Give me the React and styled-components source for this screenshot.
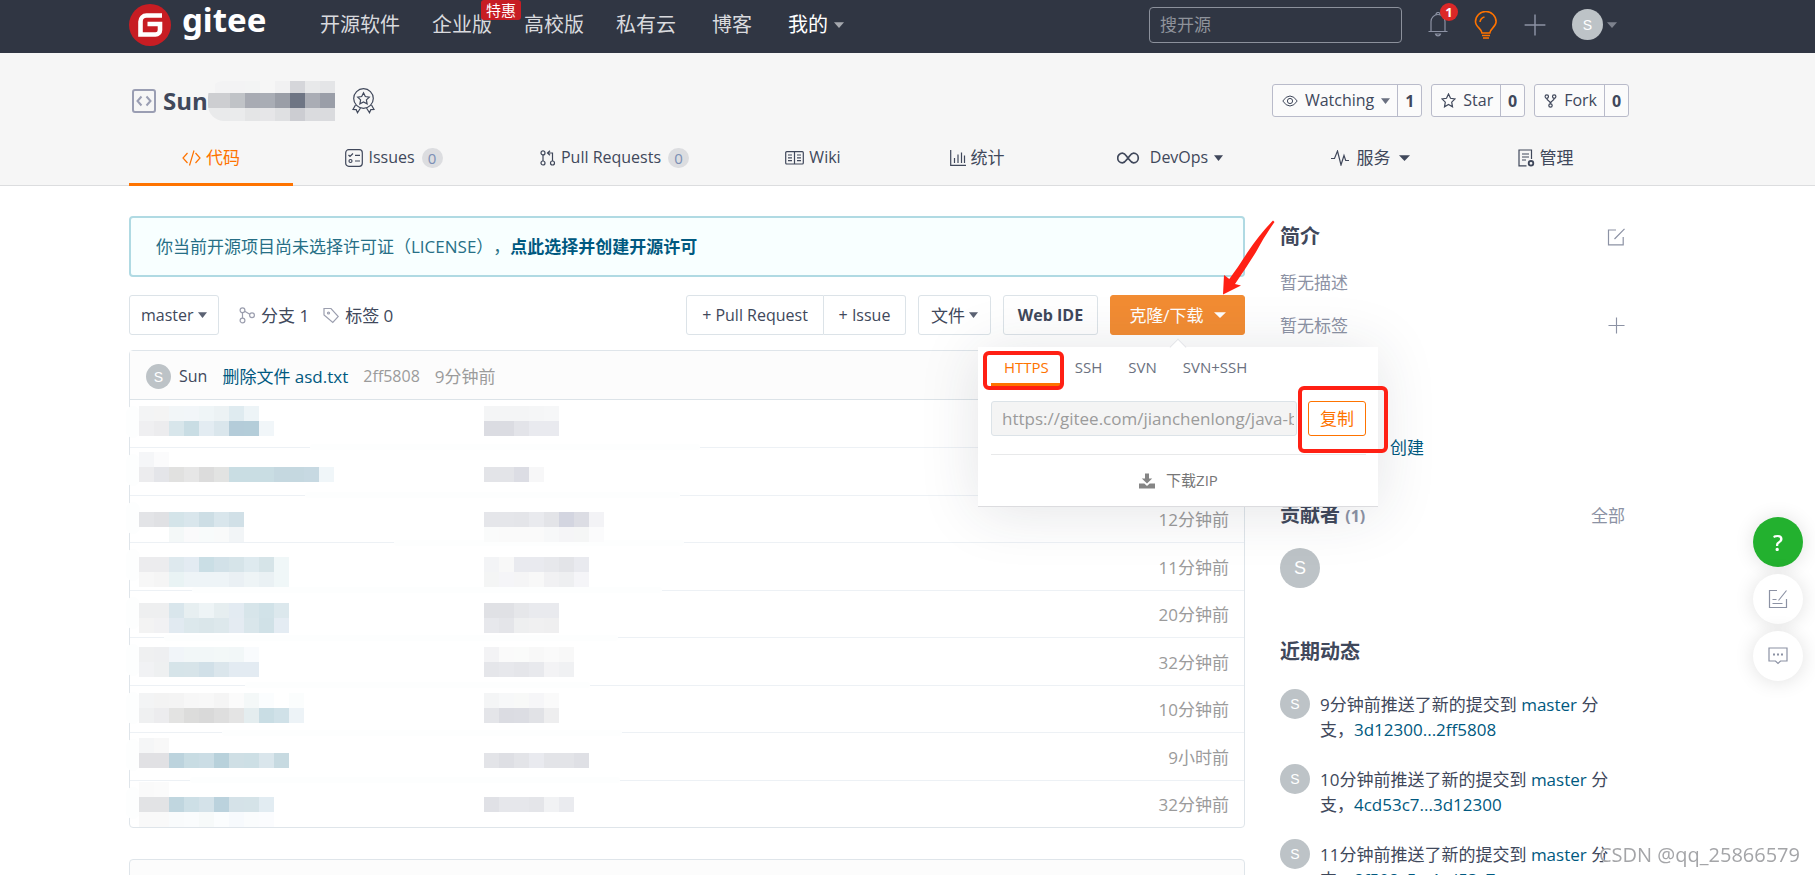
import React from "react";
import styled, { createGlobalStyle, css } from "styled-components";

const GlobalStyle = createGlobalStyle`
  *, *::before, *::after { box-sizing: border-box; }
  body {
    margin: 0;
    background: #fff;
    color: #40485b;
    font: 17px/25px "Open Sans", "Noto Sans CJK SC", sans-serif;
    text-spacing-trim: space-all;
  }
  a { color: inherit; text-decoration: none; }
  button, input, select { font: inherit; color: inherit; margin: 0; }
  h1, h2, p, ul { margin: 0; padding: 0; }
  ul { list-style: none; }
  svg { display: block; flex: none; }
`;

const Page = styled.div`
  position: relative;
  height: 100vh;
  overflow: hidden;
`;

const Container = styled.div`
  margin: 0 186px 0 129px;
`;

/* ---------- shared ---------- */

const Avatar = styled.span`
  display: flex;
  align-items: center;
  justify-content: center;
  flex: none;
  width: ${(p) => p.$size}px;
  height: ${(p) => p.$size}px;
  border-radius: 50%;
  background: #bdc3c7;
  color: #fff;
  font: 14px "Liberation Sans", sans-serif;
  ${(p) => p.$size === 40 && "font-size: 18px;"}
`;

const Caret = ({ w = 10, color = "#40485b" }) => (
  <svg width={w} height={6} viewBox="0 0 10 6" preserveAspectRatio="none" aria-hidden="true">
    <path d="M0 0.3h10L5 6z" fill={color} />
  </svg>
);

const Icon = ({ w = 18, h, vb, color = "currentColor", sw = 1.2, children }) => (
  <svg
    width={w}
    height={h || w}
    viewBox={vb || `0 0 ${w} ${h || w}`}
    fill="none"
    stroke={color}
    strokeWidth={sw}
    aria-hidden="true"
  >
    {children}
  </svg>
);

/* ---------- pixelated areas ---------- */

const MosaicClip = styled.span`
  display: flex;
  justify-content: flex-end;
  overflow: hidden;
  width: 127px;
  height: 40px;
  align-items: center;
  border-radius: 16px 0 0 16px;
`;

const MosaicBlock = styled.span`
  display: flex;
  flex-direction: column;
  flex: none;
`;

const MosaicLine = styled.span`
  display: flex;
  height: 15px;
`;

const MosaicCell = styled.i`
  width: 15px;
  background: ${(p) => p.$c};
`;

const Mosaic = ({ lines }) => (
  <MosaicBlock aria-hidden="true">
    {lines.map((line, i) => (
      <MosaicLine key={i}>
        {line.split(" ").map((c, j) => (
          <MosaicCell key={j} $c={c === "-" ? "transparent" : "#" + c} />
        ))}
      </MosaicLine>
    ))}
  </MosaicBlock>
);

/* ---------- top bar ---------- */

const TopBar = styled.header`
  background: #303643;
  height: 53px;
`;

const TopInner = styled(Container)`
  display: flex;
  align-items: center;
  height: 49px;
`;

const Logo = styled.a`
  display: flex;
  align-items: center;
  gap: 11px;
  width: 191px;
  color: #fff;
  font: bold 33px/42px "Noto Sans", sans-serif;
  span { margin-top: -9px; }
`;

const NavGroup = styled.nav`
  display: flex;
  gap: ${(p) => p.$gap}px;
  margin-right: 36px;
  color: #d9dade;
  font-size: 20px;
`;

const NavLink = styled.a`
  position: relative;
  display: flex;
  align-items: center;
  gap: 6px;
  white-space: nowrap;
  ${(p) => p.$active && "color: #fff;"}
`;

const Promo = styled.span`
  position: absolute;
  right: -29px;
  top: -12px;
  padding: 0 5px;
  border-radius: 3px;
  background: #c71d23;
  color: #fff;
  font-size: 15px;
  line-height: 20px;
`;

const Search = styled.input`
  width: 253px;
  height: 36px;
  margin-left: auto;
  padding: 0 10px;
  border: 1px solid #8c919c;
  border-radius: 4px;
  background: transparent;
  outline: none;
  &::placeholder { color: #8f939b; opacity: 1; }
`;

const IconButton = styled.button`
  position: relative;
  display: flex;
  align-items: center;
  gap: 4px;
  padding: 0;
  border: 0;
  background: none;
  color: #8c92a4;
`;

const TopActions = styled.div`
  display: flex;
  align-items: center;
  gap: 26px;
  margin: 0 12px 0 26px;
`;

const Count = styled.span`
  position: absolute;
  top: -9px;
  right: -10px;
  width: 18px;
  height: 18px;
  border-radius: 50%;
  background: #db2828;
  color: #fff;
  font-size: 13px;
  font-weight: bold;
  line-height: 18px;
`;

/* ---------- repository header ---------- */

const RepoHeader = styled.section`
  display: flow-root;
  background: #f6f6f6;
  border-bottom: 1px solid #dcdddf;
`;

const RepoTop = styled.div`
  display: flex;
  align-items: center;
  justify-content: space-between;
  height: 33px;
  margin-top: 31px;
  padding-left: 3px;
`;

const RepoName = styled.div`
  display: flex;
  align-items: center;
  gap: 7px;
  h1 {
    display: flex;
    align-items: center;
    margin-right: 10px;
    font-size: 24px;
    line-height: 33px;
  }
`;

const Stats = styled.div`
  display: flex;
  gap: 9px;
`;

const StatGroup = styled.div`
  display: flex;
  height: 33px;
  border: 1px solid #b9bbca;
  border-radius: 3px;
  background: #fff8;
`;

const StatButton = styled.button`
  display: flex;
  align-items: center;
  gap: 7px;
  padding: 0 7px 0 9px;
  border: 0;
  background: none;
  font-size: 16px;
`;

const StatCount = styled.a`
  width: 24px;
  border-left: 1px solid #b9bbca;
  font-size: 16px;
  font-weight: bold;
  line-height: 32px;
  text-align: center;
`;

const Tabs = styled.nav`
  display: grid;
  grid-template-columns: 164fr 202fr 239fr 158fr 170fr 216fr 184fr 167fr;
  margin: 12px 0 -1px;
`;

const Tab = styled.a`
  display: flex;
  align-items: center;
  justify-content: center;
  gap: ${(p) => p.$gap || 5}px;
  height: 57px;
  padding-top: 3px;
  border-bottom: 3px solid transparent;
  white-space: nowrap;
  font-size: ${(p) => (p.$latin ? 16 : 17)}px;
  ${(p) => p.$active && css`
    color: #fe7300;
    border-color: #fe7300;
  `}
`;

const TabCount = styled.span`
  min-width: 21px;
  height: 20px;
  margin-left: 2px;
  border-radius: 10px;
  background: #dcdde0;
  color: #7b8fb5;
  font-size: 15px;
  line-height: 20px;
  text-align: center;
`;

/* ---------- main column ---------- */

const Columns = styled(Container)`
  display: flex;
  gap: 35px;
  padding-top: 30px;
`;

const Main = styled.main`
  flex: 1;
  min-width: 0;
`;

const Notice = styled.p`
  padding: 16px 25px;
  border: 2px solid #b0dae3;
  border-radius: 4px;
  background: #f8ffff;
  color: #276f86;
  a { color: #005980; font-weight: bold; }
`;

const Toolbar = styled.div`
  display: flex;
  align-items: center;
  height: 40px;
  margin: 18px 0 15px;
`;

const outline = css`
  height: 40px;
  border: 1px solid #dce3e8;
  border-radius: 3px;
  background: #fff;
  color: #40485b;
`;

const BranchPicker = styled.label`
  ${outline}
  position: relative;
  display: flex;
  align-items: center;
  width: 90px;
  font-size: 16px;
  select {
    appearance: none;
    width: 100%;
    height: 100%;
    padding: 0 11px;
    border: 0;
    background: none;
    outline: none;
  }
  svg { position: absolute; right: 11px; pointer-events: none; }
`;

const Refs = styled.div`
  display: flex;
  gap: 14px;
  margin-left: 20px;
  a { display: flex; align-items: center; gap: 6px; white-space: nowrap; }
  svg { color: #9b9eae; }
`;

const Actions = styled.div`
  display: flex;
  gap: 12px;
  margin-left: auto;
`;

const Button = styled.button`
  ${outline}
  display: flex;
  align-items: center;
  justify-content: center;
  gap: 4px;
  width: ${(p) => p.$w}px;
  padding: 0;
  white-space: nowrap;
  font-size: ${(p) => (p.$latin ? 16 : 17)}px;
  ${(p) => p.$bold && "font-weight: bold;"}
  ${(p) => p.$primary && css`
    gap: 10px;
    border-color: #f28c33;
    background: #f28c33;
    color: #fff;
  `}
`;

const ButtonGroup = styled.div`
  display: flex;
  ${Button}:first-child { border-radius: 3px 0 0 3px; }
  ${Button}:last-child { border-radius: 0 3px 3px 0; border-left: 0; }
`;

const CloneMenu = styled.div`
  position: relative;
  z-index: 2;
`;

const Popup = styled.div`
  position: absolute;
  top: 52px;
  right: -133px;
  width: 400px;
  padding: 0 12px 0 13px;
  border-bottom: 1px solid #dcdcdf;
  background: #fff;
  box-shadow: 0 4px 60px rgba(40, 44, 60, 0.13);
  &::before {
    content: "";
    position: absolute;
    top: -6px;
    left: 194px;
    width: 12px;
    height: 12px;
    border: solid #e3e4e8;
    border-width: 1px 0 0 1px;
    background: #fff;
    transform: rotate(45deg);
  }
`;

const ProtocolTabs = styled.div`
  display: flex;
`;

const Protocol = styled.button`
  height: 39px;
  padding: 5px 13px 0;
  border: 0;
  border-bottom: 3px solid ${(p) => (p.$active ? "#fe7300" : "transparent")};
  background: none;
  color: ${(p) => (p.$active ? "#fe7300" : "#6b7180")};
  font-size: 15px;
`;

const CloneRow = styled.div`
  display: flex;
  gap: 11px;
  margin-top: 15px;
  padding-bottom: 18px;
  border-bottom: 1px solid #e8e9ea;
`;

const CloneUrl = styled.input`
  flex: 1;
  min-width: 0;
  height: 35px;
  padding: 0 2px 0 10px;
  border: 1px solid #dce3e8;
  border-radius: 3px;
  background: #f4f4f4;
  color: #9b9b9b;
  outline: none;
`;

const CopyButton = styled.button`
  width: 58px;
  height: 35px;
  padding: 0;
  border: 1px solid #fe7300;
  border-radius: 3px;
  background: #fff;
  color: #fe7300;
`;

const Download = styled.a`
  display: flex;
  align-items: center;
  justify-content: center;
  gap: 11px;
  height: 51px;
  color: #767676;
  font-size: 15px;
`;

const Highlight = styled.span`
  position: absolute;
  left: ${(p) => p.$x}px;
  top: ${(p) => p.$y}px;
  width: ${(p) => p.$w}px;
  height: ${(p) => p.$h}px;
  border: 4px solid #ff2014;
  border-radius: 6px;
  pointer-events: none;
`;

const Pointer = styled.svg`
  position: absolute;
  top: -77px;
  right: -33px;
  pointer-events: none;
`;

const Panel = styled.section`
  border: 1px solid #dfe5ea;
  border-radius: 4px;
`;

const Commit = styled.div`
  display: flex;
  align-items: center;
  height: 49px;
  padding: 3px 16px 0;
  border-bottom: 1px solid #dce3e8;
  background: #fcfcfc;
  white-space: nowrap;
  color: #9b9b9b;
  a:nth-of-type(1) { margin: 0 15px 0 8px; color: #40485b; font-size: 16px; }
  a:nth-of-type(2) { margin-right: 15px; color: #005980; }
  a:nth-of-type(3) { margin-right: 15px; font-size: 16px; }
`;

const Files = styled.table`
  width: 100%;
  border-collapse: collapse;
  table-layout: fixed;
`;

const FileRow = styled.tr`
  height: 48px;
  &:nth-child(odd) { height: 47px; }
  & + & td { border-top: 1px solid #edf1f5; }
`;

const Cell = styled.td`
  position: relative;
  padding: 0;
  vertical-align: ${(p) => (p.$time ? "middle" : "top")};
  ${(p) => p.$time && css`
    width: 200px;
    padding: 2px 15px 0 0;
    color: #9b9b9b;
    text-align: right;
  `}
  ${(p) => p.$name && "width: 345px;"}
`;

const MosaicPad = styled.div`
  position: relative;
  z-index: 1;
  padding: ${(p) => p.$top}px 0 0 9px;
  height: 46px;
`;

const Smear = styled.span`
  position: absolute;
  left: ${(p) => p.$x}px;
  top: ${(p) => p.$y}px;
  width: ${(p) => p.$w}px;
  height: ${(p) => p.$h}px;
  border-radius: ${(p) => Math.min(p.$h, p.$w) / 2}px;
  background: #fdfefe;
`;

const NextPanel = styled(Panel)`
  height: 60px;
  margin-top: 31px;
  background: #fcfcfc;
`;

/* ---------- sidebar ---------- */

const Side = styled.aside`
  width: 349px;
  padding: 6px 4px 0 0;
`;

const SideHead = styled.div`
  display: flex;
  align-items: center;
  justify-content: space-between;
  height: 30px;
  margin-top: ${(p) => p.$mt || 0}px;
  color: #8c92a4;
`;

const SideTitle = styled.h2`
  color: #40485b;
  font-size: 20px;
  line-height: 30px;
  small { color: #8c92a4; font-size: 16px; }
`;

const SideText = styled.div`
  display: flex;
  align-items: center;
  justify-content: space-between;
  margin-top: 18px;
  color: #8c92a4;
`;

const CreateLink = styled.a`
  display: block;
  margin: 97px 0 0 110px;
  color: #005980;
`;

const Contributors = styled.div`
  margin-top: 18px;
`;

const Event = styled.li`
  display: flex;
  gap: 10px;
  margin-top: 22px;
  p { width: 295px; margin-top: 3px; }
  a { color: #005980; }
`;

/* ---------- floating ---------- */

const Floating = styled.div`
  position: fixed;
  right: 12px;
  top: 517px;
  display: flex;
  flex-direction: column;
  gap: 7px;
`;

const Round = styled.button`
  display: flex;
  align-items: center;
  justify-content: center;
  width: 50px;
  height: 50px;
  padding: 0;
  border: 0;
  border-radius: 50%;
  background: ${(p) => (p.$green ? "#23b12f" : "#fff")};
  color: ${(p) => (p.$green ? "#fff" : "#8c92a4")};
  box-shadow: 0 1px 20px rgba(0, 0, 0, 0.12);
  font-size: 22px;
  font-weight: 600;
`;

const Watermark = styled.div`
  position: fixed;
  right: 15px;
  bottom: 8px;
  color: #a4a5a8;
  font-size: 20px;
  text-shadow: 1px 1px 0 #fff;
`;

/* ---------- data ---------- */

const files = [
  { top: 6, wipe: [180, 390], time: "",
    name: ["f3f4f5 f4f4f4 f2f6f8 f2f6f9 eff5f7 ecf2f4 dfebf0 edf4f7", "efeff1 ececee d8e6eb c9dde4 e3ecf2 dae6ec b4ccd9 b4cdd9 f1f6f9"],
    msg: ["f4f5f6 f4f5f6 f4f5f6 f5f6f7 f6f7f8", "dbdce2 dbdce2 e3e4e9 e9eaef e9eaef"] },
  { top: 4, wipe: [175, 375], time: "",
    name: ["f5f6f8 fbfbfc", "ececee e4e5e9 e1e1e0 e6e6e6 dcdcdc e2e3e2 c9dde3 c9dde3 c9dde3 c5d8e0 c5d8e0 c7d9e2 f0f6f9"],
    msg: ["-", "e3e4e8 e3e4e8 dcdde4 f7f7f8"] },
  { top: 16, wipe: [264, 290], time: "12分钟前",
    name: ["e3e4e7 e0e1e4 d4e4e9 d9e6ec cddee5 d9e6ec d1e0e7", "- - f4f8f8 fafafb f8fbfb f9fafa f2f5f7"],
    msg: ["e5e6ea e5e6ea e4e5e9 e9eaee e3e4e8 d3d5e0 dcdde4 f3f3f6", "fafbfb fafafa fafafa fafafa f7f8f9 f5f5f7 f5f6f6 fbfbfc"] },
  { top: 14, wipe: [62, 470], time: "11分钟前",
    name: ["ececee ececee dee9ee e3ebf2 cadee5 d2e1e8 d6e4e9 deeaef d6e4e8 f0f7f8", "f7f7f7 f5f5f5 e9f3f4 eef4f7 eef4f7 eef4f7 eaf0f4 eef4f6 eaf1f4 f0f7f8"],
    msg: ["f3f4f6 f8f8f8 e9eaef e9eaef e7e8ec e3e4e8 e9eaef", "f4f5f5 f5f5f8 f5f5f6 f8f8f8 f1f1f3 eeeff1 f5f5f8"] },
  { top: 12, wipe: [34, 454], time: "20分钟前",
    name: ["eeeff0 eeeff0 d9e6ec e7eff1 eef4f6 e6eef0 e3ebf2 d7e5ea d1e2e8 dce8ed", "f3f3f3 f1f1f3 e1eaf1 dce8ec dae6ea dde8ec e4ebf2 d9e6eb d0e1e7 e4ecf3"],
    msg: ["e0e1e5 e0e1e5 e6e7ea e9eaee e9eaee", "e7e8ec e4e5e9 eeeff0 f0f0f1 efeff0"] },
  { top: 9, wipe: [115, 345], time: "32分钟前",
    name: ["eff0f1 eeeff1 f1f5f9 f2f7f8 f2f7f8 f3f8f8 f2f7f8 f9fbfd", "f1f2f4 eef0f1 d6e4e9 d7e4e9 d1e0e8 dbe6ec e3ebf2 e3ebf2"],
    msg: ["f3f3f5 fafafa fafbfa f8f8f8 fafafa f8f8f8", "e5e6ea e7e8ec e5e6ea e8e9ed f3f3f5 f0f1f3"] },
  { top: 7, wipe: [92, 400], time: "10分钟前",
    name: ["f3f4f5 f3f3f3 f4f4f4 f7f7f7 f8f8f8 f5f5f5 fbfbfb f4f8f8 fbfdfe - fbfdfd", "eff0f1 ececee e3e3e2 dcdcdb d9d9d9 dedede e4e4e4 e4edef c9dde4 d0e1e8 edf3f7"],
    msg: ["f4f5f6 f7f8f9 f8f9f8 f6f6f8 fafafa", "e4e5e9 dbdce2 dcdde3 e1e2e6 eeeeef"] },
  { top: 5, wipe: [60, 430], time: "9小时前",
    name: ["f5f6f7 f8f8f8", "e1e1e4 e1e1e4 bcd3dd c8dce3 cbdde5 b8d1db cfdfe5 cddfe5 dae6ec c7dae1"],
    msg: ["-", "e3e4e8 dedfe4 e3e4e8 e9eaef e3e4e8 e3e4e8 dfe0e5"] },
  { top: 1, wipe: null, time: "32分钟前",
    name: ["fafafa fbfbfb", "e2e3e5 e2e3e5 c0d6df cddfe6 d4e2e9 bbd2dd d5e2e8 d5e3e8 e2ecf2", "f9f9f9 f9f9f9 f9fbfc fafcfd f7fafa fbfdfe f7fafd fafcfd fbfcfe"],
    msg: ["-", "e0e1e6 e6e7eb e6e7eb e4e5e9 f1f2f4 eaebef"] },
];

const events = [
  { when: "9分钟前", range: "3d12300...2ff5808" },
  { when: "10分钟前", range: "4cd53c7...3d12300" },
  { when: "11分钟前", range: "8f508c5...4cd53c7" },
];

const title = [
  "f6f6f6 f3f3f4 f3f3f4 f3f4f4 f6f6f6 f1f1f2 d5d6da e8e9ea e4e5e7",
  "cdced1 cdced1 c0c3c7 a8abb3 a9adb5 9a9ea7 6e7584 aaadb5 9a9ea8",
  "e9eaeb e9eaeb eaebec e4e5e6 e6e6e8 dfe0e2 cccdd2 dadbde dadbde",
];

/* ---------- icons ---------- */

const EditIcon = () => (
  <Icon w={18} h={18}>
    <path d="M9 2H1.5v14.8h14.7V9M7.5 11 17.5 0.8" />
  </Icon>
);

const PlusIcon = ({ w }) => (
  <Icon w={w} vb="0 0 18 18"><path d="M9 0.5v17M0.5 9h17" /></Icon>
);

/* ---------- sections ---------- */

const SiteHeader = () => (
  <TopBar>
    <TopInner>
      <Logo href="#">
        <svg width="42" height="42" viewBox="0 0 42 42" aria-hidden="true">
          <circle cx="21" cy="21" r="21" fill="#c71d23" />
          <path d="M33 11.5H17.5a6 6 0 0 0-6 6V30.5H26.5a4.5 4.5 0 0 0 4.500-4.500V20H18.500" fill="none" stroke="#fff" strokeWidth="4.600" />
        </svg>
        <span>gitee</span>
      </Logo>
      <NavGroup $gap={32}>
        <NavLink href="#">开源软件</NavLink>
        <NavLink href="#">企业版<Promo>特惠</Promo></NavLink>
        <NavLink href="#">高校版</NavLink>
        <NavLink href="#">私有云</NavLink>
      </NavGroup>
      <NavGroup $gap={36}>
        <NavLink href="#">博客</NavLink>
        <NavLink href="#" $active>我的<Caret color="#a5a8ae" /></NavLink>
      </NavGroup>
      <Search placeholder="搜开源" aria-label="搜开源" />
      <TopActions>
        <IconButton aria-label="通知">
          <Icon w={20} h={25}>
            <path d="M0.5 19.500h19M3 19.500V9.500a7 7 0 0 1 14 0v10M8 2.500a2 2 0 0 1 4 0M7.500 22a2.600 2.600 0 0 0 5 0z" />
          </Icon>
          <Count>1</Count>
        </IconButton>
        <IconButton aria-label="提示">
          <Icon w={24} h={28} color="#fe7300" sw={1.6}>
            <path d="M8 22c0-4-6.500-6-6.500-11.200a10.300 10.300 0 0 1 20.600 0C22.100 16 15.800 18 15.800 22zM6 11a6 6 0 0 1 4.500-5M8 24.500h8M9 27h6" />
          </Icon>
        </IconButton>
        <IconButton aria-label="新建"><PlusIcon w={22} /></IconButton>
        <IconButton aria-label="账户"><Avatar $size={31}>S</Avatar><Caret color="#7d828d" /></IconButton>
      </TopActions>
    </TopInner>
  </TopBar>
);

const RepoStats = () => (
  <Stats>
    <StatGroup>
      <StatButton>
        <Icon w={16} h={12} sw={1}>
          <path d="M.8 6Q4 1 8 1t7.200 5Q12 11 8 11T.8 6z" /><circle cx="8" cy="6" r="2.600" />
        </Icon>
        Watching<Caret w={9} color="#6a7080" />
      </StatButton>
      <StatCount href="#">1</StatCount>
    </StatGroup>
    <StatGroup>
      <StatButton>
        <Icon w={15} h={15}><path d="M7.500 1l2 4.300 4.500.6-3.300 3.200.8 4.700-4-2.300-4 2.300.8-4.700L1 5.900l4.500-.6z" /></Icon>
        Star
      </StatButton>
      <StatCount href="#">0</StatCount>
    </StatGroup>
    <StatGroup>
      <StatButton>
        <Icon w={13} h={14}>
          <circle cx="2.800" cy="2.600" r="1.700" /><circle cx="10.200" cy="2.600" r="1.700" /><circle cx="6.500" cy="11.500" r="1.700" />
          <path d="M2.800 4.300c0 3 3.700 2 3.700 5.500M10.200 4.300c0 3-3.700 2-3.700 5.500" />
        </Icon>
        Fork
      </StatButton>
      <StatCount href="#">0</StatCount>
    </StatGroup>
  </Stats>
);

const RepoTabs = () => (
  <Tabs>
    <Tab href="#" $active>
      <Icon w={19} h={18}><path d="M5.500 4 1 9l4.500 5M13.500 4 18 9l-4.500 5M12 1.500 7.500 16.500" /></Icon>代码
    </Tab>
    <Tab href="#" $latin>
      <Icon w={18} h={18}>
        <rect x="0.700" y="0.700" width="16.600" height="16.600" rx="3" />
        <path d="M3.500 6l1.500 1.500L8 4.500M10 6.300h5M10 12h5" /><circle cx="5.500" cy="12" r="1.500" />
      </Icon>
      Issues<TabCount>0</TabCount>
    </Tab>
    <Tab href="#" $latin>
      <Icon w={16} h={16}>
        <circle cx="3" cy="2.900" r="2" /><circle cx="3" cy="13" r="2" /><circle cx="12.500" cy="13" r="2" />
        <path d="M3 5v6M12.500 11V3H8M10 0.800 7.500 3 10 5.200" />
      </Icon>
      Pull Requests<TabCount>0</TabCount>
    </Tab>
    <Tab href="#" $latin>
      <Icon w={19} h={14}>
        <rect x="0.700" y="0.700" width="17.600" height="12.300" rx="1" />
        <path d="M9.500 1v12M3 4h4M3 6.800h4M3 9.600h4M12 4h4M12 6.800h4M12 9.600h4" />
      </Icon>
      Wiki
    </Tab>
    <Tab href="#">
      <Icon w={16} h={16}><path d="M0.700 0v15.300H16M4.500 13V8M8 13V4.500M11.500 13V2.500M14.500 13V5.500" /></Icon>统计
    </Tab>
    <Tab href="#" $latin $gap={6}>
      <Icon w={27} h={12} sw={1.7}>
        <path d="M11 6C9 3.500 8 1.200 5.500 1.200a4.800 4.800 0 0 0 0 9.600C8 10.800 9 8.500 11 6s3-4.800 5.500-4.800a4.800 4.800 0 0 1 0 9.600C14 10.800 13 8.500 11 6z" />
      </Icon>
      DevOps<Caret w={9} />
    </Tab>
    <Tab href="#" $gap={8}>
      <Icon w={18} h={16}><path d="M0 8.500h3.500L6.500 1l3.500 14 3-9.500 1.700 5H18" /></Icon>
      服务<Caret w={11} />
    </Tab>
    <Tab href="#">
      <Icon w={17} h={18}>
        <path d="M8.500 16.800H1V1h12.500v9M4 5h7M4 8h7M4 11h4" /><circle cx="13" cy="14.300" r="2.300" strokeWidth="1.800" />
      </Icon>
      管理
    </Tab>
  </Tabs>
);

const ClonePopup = () => (
  <Popup>
    <ProtocolTabs>
      <Protocol $active>HTTPS</Protocol>
      <Protocol>SSH</Protocol>
      <Protocol>SVN</Protocol>
      <Protocol>SVN+SSH</Protocol>
    </ProtocolTabs>
    <CloneRow>
      <CloneUrl readOnly aria-label="克隆地址" value="https://gitee.com/jianchenlong/java-base" />
      <CopyButton>复制</CopyButton>
    </CloneRow>
    <Download href="#">
      <svg width="16" height="16" viewBox="0 0 16 16" fill="#858585" aria-hidden="true">
        <path d="M6 0.500h4v5h3.200L8 10.500 2.800 5.500H6zM0 10.500h5.300L8 13l2.700-2.500H16V15.500H0z" />
      </svg>
      下载ZIP
    </Download>
    <Highlight $x={5} $y={4} $w={81} $h={39} />
    <Highlight $x={320} $y={39} $w={90} $h={67} />
  </Popup>
);

const FileTable = () => (
  <Files>
    <tbody>
      {files.map((f, i) => (
        <FileRow key={i}>
          <Cell $name>
            <Smear $x={-4} $y={6} $w={14} $h={32} />
            {f.wipe && <Smear $x={f.wipe[0]} $y={44} $w={f.wipe[1]} $h={6} />}
            <MosaicPad $top={f.top}><Mosaic lines={f.name} /></MosaicPad>
          </Cell>
          <Cell><MosaicPad $top={f.top}><Mosaic lines={f.msg} /></MosaicPad></Cell>
          <Cell $time>{f.time}</Cell>
        </FileRow>
      ))}
    </tbody>
  </Files>
);

const Sidebar = () => (
  <Side>
    <SideHead>
      <SideTitle>简介</SideTitle>
      <IconButton aria-label="编辑"><EditIcon /></IconButton>
    </SideHead>
    <SideText>暂无描述</SideText>
    <SideText>暂无标签<IconButton aria-label="添加标签"><PlusIcon w={17} /></IconButton></SideText>
    <CreateLink href="#">创建</CreateLink>
    <SideHead $mt={40}>
      <SideTitle>贡献者 <small>(1)</small></SideTitle>
      <a href="#">全部</a>
    </SideHead>
    <Contributors><Avatar $size={40}>S</Avatar></Contributors>
    <SideHead $mt={49}><SideTitle>近期动态</SideTitle></SideHead>
    <ul>
      {events.map((e) => (
        <Event key={e.range}>
          <Avatar $size={30}>S</Avatar>
          <p>{e.when}推送了新的提交到 <a href="#">master</a> 分支，<a href="#">{e.range}</a></p>
        </Event>
      ))}
    </ul>
  </Side>
);

export default function App() {
  return (
    <Page>
      <GlobalStyle />
      <SiteHeader />

      <RepoHeader>
        <Container>
          <RepoTop>
            <RepoName>
              <Icon w={24} h={24} color="#9a9eb3" sw={2}>
                <rect x="1" y="1" width="22" height="22" rx="2" />
                <path d="M9.500 7.500 5.500 12l4 4.500M14.500 7.500l4 4.500-4 4.500" />
              </Icon>
              <h1>Sun<MosaicClip><Mosaic lines={title} /></MosaicClip></h1>
              <Icon w={23} h={26}>
                <circle cx="11.500" cy="10.500" r="9.800" />
                <path d="M11.500 4.800l1.800 3.700 4 .6-2.900 2.800.7 4-3.600-1.900-3.600 1.900.7-4-2.900-2.800 4-.6z" />
                <path d="M3.500 17 1 21.500l3.200.2 1.300 3L8.500 20M19.500 17l2.500 4.500-3.200.2-1.300 3L14.500 20" />
              </Icon>
            </RepoName>
            <RepoStats />
          </RepoTop>
          <RepoTabs />
        </Container>
      </RepoHeader>

      <Columns>
        <Main>
          <Notice>你当前开源项目尚未选择许可证（LICENSE），<a href="#">点此选择并创建开源许可</a></Notice>
          <Toolbar>
            <BranchPicker>
              <select aria-label="分支" defaultValue="master"><option>master</option></select>
              <Caret w={9} color="#5b6273" />
            </BranchPicker>
            <Refs>
              <a href="#">
                <Icon w={16} h={17}>
                  <circle cx="3.500" cy="3.300" r="2.400" /><circle cx="3.500" cy="13.500" r="2.400" /><circle cx="13" cy="8.300" r="2.400" />
                  <path d="M3.500 5.700v5.400M5.700 4.200 10.800 7.300" />
                </Icon>
                分支 1
              </a>
              <a href="#">
                <Icon w={16} h={17}>
                  <path d="M1 1.500h7l7.300 8-5.500 6L1 8z" /><circle cx="5.500" cy="6" r="1" />
                </Icon>
                标签 0
              </a>
            </Refs>
            <Actions>
              <ButtonGroup>
                <Button $w={138} $latin>+ Pull Request</Button>
                <Button $w={82} $latin>+ Issue</Button>
              </ButtonGroup>
              <Button $w={73}>文件<Caret w={9} color="#5b6273" /></Button>
              <Button $w={95} $latin $bold>Web IDE</Button>
              <CloneMenu>
                <Button $w={135} $primary>克隆/下载<Caret w={12} color="#fff" /></Button>
                <ClonePopup />
                <Pointer width="60" height="80" viewBox="0 0 60 80" aria-hidden="true">
                  <path d="M55 2.500Q41 17 29 35 21 48 11.300 61L6 57 5 76.500 23 67.500 17 66Q28 50 38 34 46 19 56.500 4z" fill="#ff2014" />
                </Pointer>
              </CloneMenu>
            </Actions>
          </Toolbar>

          <Panel>
            <Commit>
              <Avatar $size={25}>S</Avatar>
              <a href="#">Sun</a>
              <a href="#">删除文件 asd.txt</a>
              <a href="#">2ff5808</a>
              <span>9分钟前</span>
            </Commit>
            <FileTable />
          </Panel>
          <NextPanel />
        </Main>
        <Sidebar />
      </Columns>

      <Floating>
        <Round $green>?</Round>
        <Round aria-label="反馈">
          <Icon w={20} h={20}><path d="M9 1.500H1.500v17h17V10M10.500 11.500 18.500 1.500M4.500 10.500h4M4.500 14.500h10" /></Icon>
        </Round>
        <Round aria-label="评论">
          <Icon w={20} h={18}>
            <path d="M1 1h18v13h-6.500L10 16.500 7.500 14H1z" />
            <path d="M5 7.500h2M9 7.500h2M13 7.500h2" strokeWidth="1.800" />
          </Icon>
        </Round>
      </Floating>
      <Watermark>CSDN @qq_25866579</Watermark>
    </Page>
  );
}
